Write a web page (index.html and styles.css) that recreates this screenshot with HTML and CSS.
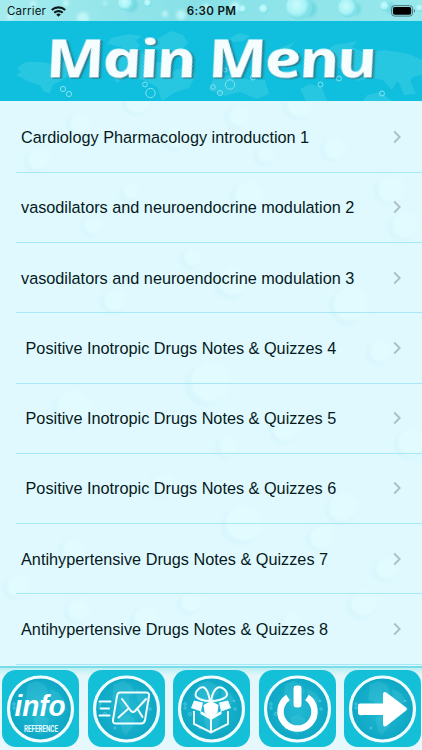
FILE: index.html
```html
<!DOCTYPE html>
<html lang="en">
<head>
    <meta charset="UTF-8">
    <meta name="viewport" content="width=device-width, initial-scale=1.0">
    <title>Main Menu</title>
    <link rel="stylesheet" href="styles.css">
</head>
<body>
    <svg width="0" height="0" class="defs">
        <defs>
            <radialGradient id="drop" cx="40%" cy="42%">
                <stop offset="0" stop-color="#c9fbfd"/>
                <stop offset="0.7" stop-color="#aaf2f6"/>
                <stop offset="1" stop-color="#7fe0e7"/>
            </radialGradient>
            <radialGradient id="globe">
                <stop offset="0" stop-color="#22b9d2"/>
                <stop offset="1" stop-color="#0da7c5"/>
            </radialGradient>
            <filter id="soft"><feGaussianBlur stdDeviation="1.8"/></filter>
            <symbol id="badge" viewBox="0 0 77 77">
                <rect width="77" height="77" rx="14" fill="#14bfd8"/>
                <circle cx="38.5" cy="39" r="32" fill="url(#globe)" stroke="#f0fdff" stroke-width="3.2"/>
                <path d="M26 14l9-3 8 4 3 7-5 5 1 8-8 4-4-7-6-3zM48 19l9 4 5 8-6 4-7-5zM31 48l8-4 8 5-2 8-7 8-4-4z" fill="#69d7e7" opacity=".2"/>
                <g fill="none" stroke="#8be3ee" stroke-width=".6" opacity=".8">
                    <circle cx="12" cy="34" r="1.3"/><circle cx="12" cy="38" r="1.2"/><circle cx="17" cy="44" r="1.5"/>
                    <circle cx="61" cy="31" r=".8"/><circle cx="62" cy="39" r="1.2"/><circle cx="27" cy="58" r="1"/>
                </g>
            </symbol>
        </defs>
    </svg>

    <div class="phone">
        <div class="status">
            <svg class="drops" width="422" height="21" viewBox="0 0 422 21">
                <g fill="#d8ffff" opacity=".6" filter="url(#soft)">
                    <circle cx="10" cy="17" r="3"/><circle cx="33" cy="4" r="3"/><circle cx="66" cy="3" r="3"/>
                    <circle cx="83" cy="18" r="6"/><circle cx="105" cy="3" r="2"/><circle cx="165" cy="14" r="3"/>
                    <circle cx="181" cy="15" r="5"/><circle cx="206" cy="8" r="4"/><circle cx="235" cy="7" r="5"/>
                </g>
                <g fill="#36b9c7" opacity=".3" filter="url(#soft)">
                    <circle cx="131" cy="5" r="7"/><circle cx="309" cy="9" r="8"/><circle cx="355" cy="9" r="6"/>
                    <circle cx="390" cy="8" r="5"/>
                </g>
                <circle cx="126" cy="3" r="8" fill="url(#drop)"/>
                <circle cx="148" cy="3" r="4" fill="url(#drop)"/>
                <circle cx="243" cy="9" r="4" fill="url(#drop)"/>
                <circle cx="264" cy="9" r="5" fill="url(#drop)"/>
                <circle cx="299" cy="7" r="13" fill="url(#drop)"/>
                <circle cx="348" cy="8" r="10" fill="url(#drop)"/>
                <circle cx="385" cy="6" r="5" fill="url(#drop)"/>
                <circle cx="420" cy="8" r="4" fill="url(#drop)"/>
            </svg>
            <span class="carrier">Carrier
                <svg width="15" height="11" viewBox="0 0 15 11">
                    <g fill="none" stroke="#0b1719" stroke-width="2.1">
                        <path d="M.8 4.1a9.6 9.6 0 0 1 13.4 0"/>
                        <path d="M3.3 6.8a6 6 0 0 1 8.4 0"/>
                    </g>
                    <path d="M7.5 10.8L5.2 8.6a3.3 3.3 0 0 1 4.6 0z" fill="#0b1719"/>
                </svg>
            </span>
            <span class="time">6:30 PM</span>
            <svg class="battery" width="25" height="12" viewBox="0 0 25 12">
                <rect x=".6" y=".6" width="21" height="10.5" rx="3" fill="none" stroke="#4b797e"/>
                <rect x="2" y="2" width="18.2" height="7.7" rx="1.8" fill="#000"/>
                <path d="M23 4q2 1.8 0 3.7z" fill="#3d7277"/>
            </svg>
        </div>

        <header class="title">
            <svg width="422" height="80" viewBox="0 0 422 80">
                <g fill="#84e8f3" opacity=".2">
                    <path d="M17 47l9-6 17 0 12 3 8-3 9 8-7 8-12 7-3 8-6-1-4-7-10-3-8-4-6-3 5-3z"/>
                    <path d="M111 17l18-4 13 2-6 4 4 6-14 9-5-8-14-3zM157 18l14-8 12 4 5 8-8 8-10 8-5-8-13-4z"/>
                    <path d="M124 31l16-2 9 10 13 3 11 8 15-5 8 9-7 13-15 5-12 8-5-14-14-7-16-3-10 6-9-13z"/>
                    <path d="M230 17l9-5 11 3-7 5-10 1zM280 27l15-6-8 9-7 3 3 7-8 1zM213 58l17-4 20 5 15 0 4 14-12 5-17-7-15 4-16-6z"/>
                    <path d="M324 32l10-8 24-4-6 6 11 5 23-2 23 4 13 6v15l-9 2-8 13-8-9-5 9-9-10-12-2-15 3-9-8-13-8-10 2z"/>
                    <path d="M300 68l10-5 12 4 5 13h-21zM367 74l13-3 12 9h-29zM400 64l10-4 6 13-12 1z"/>
                </g>
                <g fill="none" stroke="#83e4ef" stroke-width="1">
                    <circle cx="63" cy="68" r="2.6"/><circle cx="69" cy="73" r="2.6"/><circle cx="145" cy="63.5" r="2.4"/>
                    <circle cx="150.5" cy="72" r="4.7"/><circle cx="225" cy="49" r="2"/><circle cx="230" cy="63.5" r="4.7"/>
                    <circle cx="220" cy="72" r="2.5"/><circle cx="253" cy="56.5" r="2.5"/><circle cx="213" cy="66" r="2.3"/>
                    <circle cx="320.5" cy="63.5" r="2.5"/><circle cx="339" cy="57.5" r="2.5"/><circle cx="382" cy="72.5" r="2.5"/>
                </g>
                <!-- italic set upright again, for its round one-storey a -->
                <g transform="translate(49 56.5) skewX(12.5) scale(1.3 1)">
                    <text class="heading" x="0" y="0" textLength="255" lengthAdjust="spacing">Main Menu</text>
                </g>
            </svg>
        </header>

        <main class="menu">
            <svg class="bubbles" width="422" height="565" viewBox="0 0 422 565">
                <g fill="#74cbd8" opacity=".06" filter="url(#soft)">
                    <circle cx="135" cy="2" r="13"/><circle cx="297" cy="5" r="14"/><circle cx="235" cy="17" r="11"/><circle cx="77" cy="24" r="11"/>
                    <circle cx="36" cy="60" r="12"/><circle cx="263" cy="55" r="10"/><circle cx="332" cy="49" r="12"/><circle cx="174" cy="38" r="12"/>
                    <circle cx="128" cy="92" r="9"/><circle cx="245" cy="97" r="15"/><circle cx="388" cy="90" r="14"/><circle cx="90" cy="126" r="10"/>
                    <circle cx="402" cy="126" r="14"/><circle cx="190" cy="158" r="10"/><circle cx="229" cy="183" r="15"/><circle cx="112" cy="201" r="12"/>
                    <circle cx="347" cy="206" r="18"/><circle cx="378" cy="252" r="12"/><circle cx="206" cy="284" r="21"/><circle cx="70" cy="309" r="18"/>
                    <circle cx="283" cy="329" r="14"/><circle cx="409" cy="344" r="15"/><circle cx="226" cy="347" r="11"/><circle cx="160" cy="385" r="12"/>
                    <circle cx="340" cy="409" r="15"/><circle cx="240" cy="425" r="19"/><circle cx="71" cy="450" r="12"/><circle cx="319" cy="438" r="13"/>
                    <circle cx="384" cy="469" r="12"/><circle cx="15" cy="487" r="12"/><circle cx="188" cy="503" r="11"/><circle cx="361" cy="505" r="14"/>
                    <circle cx="76" cy="511" r="12"/><circle cx="144" cy="520" r="14"/><circle cx="290" cy="523" r="11"/>
                </g>
                <g fill="#e2fbff" filter="url(#soft)">
                    <circle cx="138" cy="0" r="12"/><circle cx="300" cy="3" r="13"/><circle cx="239" cy="15" r="10"/><circle cx="80" cy="22" r="10"/>
                    <circle cx="39" cy="58" r="11"/><circle cx="266" cy="53" r="9"/><circle cx="335" cy="47" r="11"/><circle cx="177" cy="36" r="11"/>
                    <circle cx="131" cy="90" r="8"/><circle cx="249" cy="94" r="14"/><circle cx="391" cy="88" r="13"/><circle cx="93" cy="124" r="9"/>
                    <circle cx="405" cy="124" r="13"/><circle cx="193" cy="156" r="9"/><circle cx="233" cy="180" r="14"/><circle cx="115" cy="199" r="11"/>
                    <circle cx="351" cy="203" r="17"/><circle cx="381" cy="250" r="11"/><circle cx="211" cy="281" r="20"/><circle cx="74" cy="306" r="17"/>
                    <circle cx="286" cy="327" r="13"/><circle cx="412" cy="341" r="14"/><circle cx="229" cy="345" r="10"/><circle cx="163" cy="383" r="11"/>
                    <circle cx="343" cy="406" r="14"/><circle cx="244" cy="422" r="18"/><circle cx="74" cy="448" r="11"/><circle cx="322" cy="436" r="12"/>
                    <circle cx="387" cy="467" r="11"/><circle cx="18" cy="485" r="11"/><circle cx="191" cy="501" r="10"/><circle cx="364" cy="502" r="13"/>
                    <circle cx="79" cy="509" r="11"/><circle cx="147" cy="518" r="13"/><circle cx="293" cy="521" r="10"/>
                </g>
            </svg>
            <a class="row"><span>Cardiology Pharmacology introduction 1</span><svg width="9" height="14" viewBox="0 0 9 14"><path d="M1.2 1.5L6.7 7l-5.5 5.5"/></svg></a>
            <a class="row"><span>vasodilators and neuroendocrine modulation 2</span><svg width="9" height="14" viewBox="0 0 9 14"><path d="M1.2 1.5L6.7 7l-5.5 5.5"/></svg></a>
            <a class="row"><span>vasodilators and neuroendocrine modulation 3</span><svg width="9" height="14" viewBox="0 0 9 14"><path d="M1.2 1.5L6.7 7l-5.5 5.5"/></svg></a>
            <a class="row"><span> Positive Inotropic Drugs Notes &amp; Quizzes 4</span><svg width="9" height="14" viewBox="0 0 9 14"><path d="M1.2 1.5L6.7 7l-5.5 5.5"/></svg></a>
            <a class="row"><span> Positive Inotropic Drugs Notes &amp; Quizzes 5</span><svg width="9" height="14" viewBox="0 0 9 14"><path d="M1.2 1.5L6.7 7l-5.5 5.5"/></svg></a>
            <a class="row"><span> Positive Inotropic Drugs Notes &amp; Quizzes 6</span><svg width="9" height="14" viewBox="0 0 9 14"><path d="M1.2 1.5L6.7 7l-5.5 5.5"/></svg></a>
            <a class="row"><span>Antihypertensive Drugs Notes &amp; Quizzes 7</span><svg width="9" height="14" viewBox="0 0 9 14"><path d="M1.2 1.5L6.7 7l-5.5 5.5"/></svg></a>
            <a class="row"><span>Antihypertensive Drugs Notes &amp; Quizzes 8</span><svg width="9" height="14" viewBox="0 0 9 14"><path d="M1.2 1.5L6.7 7l-5.5 5.5"/></svg></a>
        </main>

        <nav class="tabs">
            <svg class="tab" viewBox="0 0 77 77">
                <use href="#badge"/>
                <text class="info" x="12.5" y="46" textLength="51" lengthAdjust="spacingAndGlyphs">info</text>
                <g transform="translate(22 61.5) scale(.66 1)">
                    <text class="reference" x="0" y="0" textLength="51.500" lengthAdjust="spacing">REFERENCE</text>
                </g>
            </svg>
            <svg class="tab" viewBox="0 0 77 77">
                <use href="#badge"/>
                <g fill="none" stroke="#f2fdff" stroke-width="2" stroke-linecap="round" stroke-linejoin="round">
                    <path d="M32 22.5h26q3.5 0 3 3.5l-4 24q-.7 3.5-4 3.5H28q-3.5 0-3-3.5l4-24q.5-3.5 3-3.5z"/>
                    <path d="M34 29l9 12q2 2 4 0l11-12M30.5 47.5l10-9M49.5 39l5 8"/>
                    <path d="M11.5 31.5h11M13 38.5h8M11.5 45.5h10"/>
                </g>
            </svg>
            <svg class="tab" viewBox="0 0 77 77">
                <use href="#badge"/>
                <g fill="none" stroke="#f2fdff" stroke-width="2">
                    <path d="M37 31c-5 0-15-2-14.500-6.500C23 20 28 16 31 17.500c4 2 5 8 6 13.500zM38 31c1-6 3-12 7-13.500 4-1.500 9 3 9 7 0 4.500-11 6.500-16 6.500z"/>
                    <path d="M21 41v13l17 8.500L55 54V41M38 47v15"/>
                </g>
                <path d="M21 30.500l9 2-2 9-10-3.500zM55 30.500l-9 2 2 9 10-3.500z" fill="#f4fdff"/>
                <path d="M27.500 41l10.500 5 10.500-5v3L38 50l-10.500-6z" fill="#f4fdff"/>
                <path d="M38 31l7.500 4-1 7.500-6.500 5-6.500-5-1-7.500z" fill="#fff"/>
            </svg>
            <svg class="tab" viewBox="0 0 77 77">
                <use href="#badge"/>
                <path d="M29 27.500a17 17 0 1 0 19 0" fill="none" stroke="#fff" stroke-width="6.500"/>
                <rect x="34" y="15" width="9" height="23" rx="3" fill="#fff" stroke="#14b0ca" stroke-width="1"/>
            </svg>
            <svg class="tab" viewBox="0 0 77 77">
                <use href="#badge"/>
                <path d="M16 33.500h23V25q0-5 4-2l18.500 14q2.500 2 0 4L43 55.500q-4 2.500-4-2V45H16q-2 0-2-2v-7.500q0-2 2-2z" fill="#fff"/>
            </svg>
        </nav>
    </div>
</body>
</html>
```

FILE: styles.css
```css
body{
    margin: 0;
    font-family: "Liberation Sans", Arial, sans-serif;
}
.defs{
    position: absolute;
}
.phone{
    width: 422px;
    height: 750px;
    display: flex;
    flex-direction: column;
    overflow: hidden;
    background-color: #dff9ff;
}
.status{
    position: relative;
    height: 21px;
    display: grid;
    grid-template-columns: 1fr auto 1fr;
    align-items: center;
    padding: 1px 6px 0 7px;
    box-sizing: border-box;
    background: linear-gradient(90deg, #a5ebee, #87e1e7 45%, #97e8ec);
    font-family: Inter, sans-serif;
    font-size: 11.5px;
    color: #0b1719;
}
.drops{
    position: absolute;
    top: 0;
    left: 0;
}
.carrier, .time, .battery{
    position: relative;
}
.carrier{
    display: flex;
    align-items: center;
    gap: 5px;
    letter-spacing: 0.2px;
}
.time{
    font-weight: 600;
    font-size: 11.6px;
    letter-spacing: 0.3px;
}
.battery{
    justify-self: end;
}
.title{
    height: 80px;
    background-color: #10bedd;
}
.title svg{
    display: block;
}
.heading{
    font-family: "Open Sans", "Century Gothic", sans-serif;
    font-size: 52px;
    font-weight: 700;
    font-style: italic;
    fill: #f5fdff;
    filter: drop-shadow(1px 1.5px 0.7px #246a78);
}
.menu{
    position: relative;
    flex: none;
    height: 565px;
    padding: 1.6px 0 0 16px;
    box-sizing: border-box;
    overflow: hidden;
}
.bubbles{
    position: absolute;
    top: 0;
    left: 0;
}
.row{
    position: relative;
    display: flex;
    align-items: center;
    justify-content: space-between;
    height: 70.25px;
    padding: 1px 20px 0 5px;
    box-sizing: border-box;
    border-bottom: 1px solid #a5e9f9;
    font-size: 16.25px;
    color: #07191c;
    white-space: pre;
}
.row svg{
    margin-bottom: 1px;
    fill: none;
    stroke: #a9bfc5;
    stroke-width: 1.8;
}
.tabs{
    flex: 1;
    display: flex;
    gap: 8.5px;
    padding: 2px 0 0 2px;
    border-top: 2px solid #79dce7;
    background: linear-gradient(#bceff4, #e3f7fa 8px, #e6f8fb);
}
.tab{
    flex: none;
    width: 77px;
    height: 77px;
}
.info{
    font-family: "Liberation Sans", Arial, sans-serif;
    font-size: 30px;
    font-style: italic;
    font-weight: 700;
    fill: #fff;
}
.reference{
    font-family: Roboto, Arial, sans-serif;
    font-size: 9.5px;
    font-weight: 700;
    fill: #e5faff;
}
```
